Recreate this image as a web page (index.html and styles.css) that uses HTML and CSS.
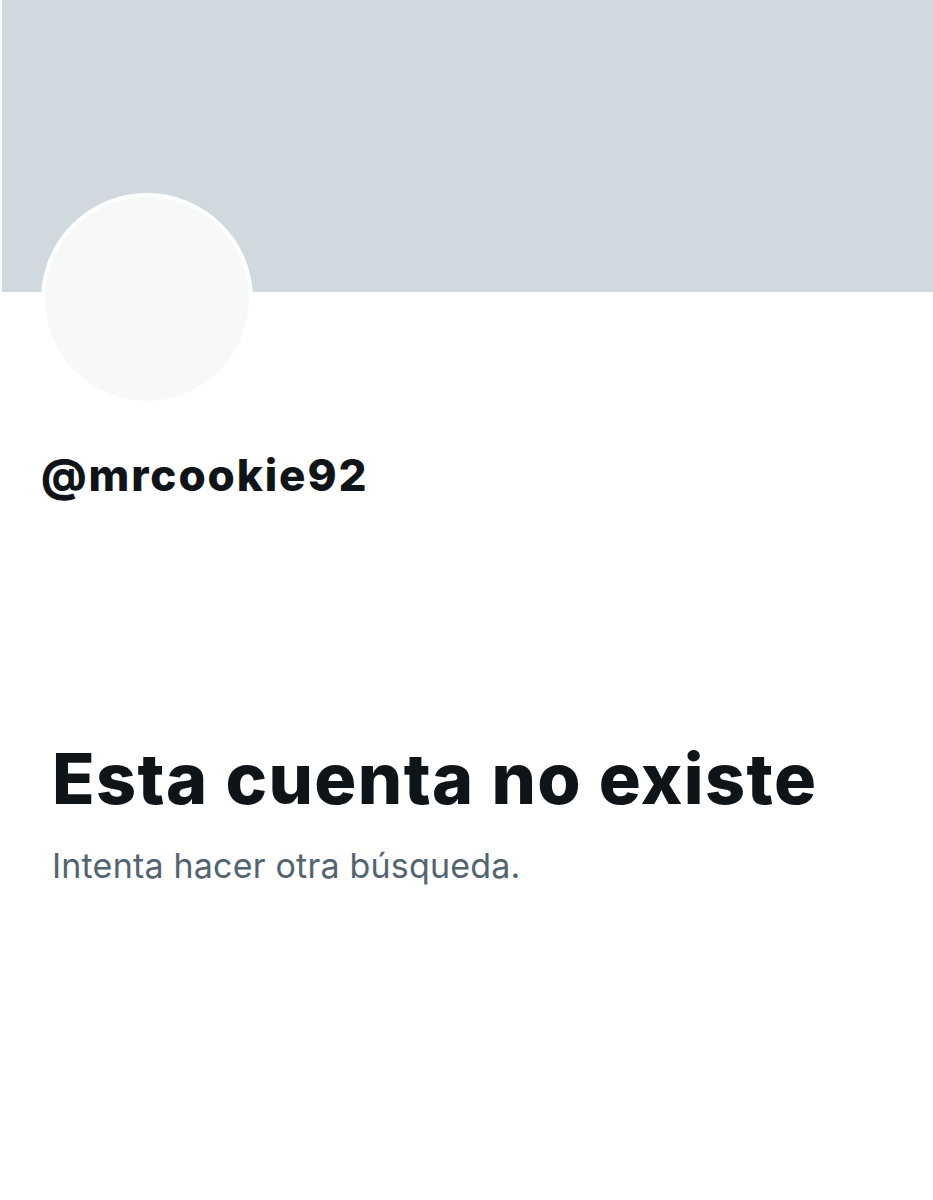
FILE: index.html
```html
<!DOCTYPE html>
<html lang="es">
<head>
<meta charset="utf-8">
<title>@mrcookie92</title>
<link rel="stylesheet" href="styles.css">
</head>
<body>
<main class="page">
  <header class="profile-top">
    <div class="banner"></div>
    <div class="avatar-row">
      <div class="avatar"></div>
    </div>
  </header>
  <div class="handle">@mrcookie92</div>
  <section class="empty">
    <h1 class="empty-title">Esta cuenta no existe</h1>
    <p class="empty-sub">Intenta hacer otra búsqueda.</p>
  </section>
</main>
</body>
</html>
```

FILE: styles.css
```css
html, body {
  margin: 0;
  padding: 0;
  background: #ffffff;
}
body {
  font-family: Inter, "Noto Sans", "Liberation Sans", sans-serif;
  color: #0f1419;
  width: 933px;
  height: 1200px;
  overflow: hidden;
}
.page {
  display: flex;
  flex-direction: column;
}
.profile-top {
  display: flex;
  flex-direction: column;
}
.banner {
  height: 292px;
  margin-left: 2px;
  background: #cfd9de;
}
.avatar-row {
  display: flex;
  padding-left: 41px;
  margin-top: -99px;
}
.avatar {
  width: 204px;
  height: 204px;
  border-radius: 50%;
  background: #f7f9f9;
  border: 4px solid #ffffff;
}
.handle {
  margin: 44px 0 0 41px;
  font-size: 44px;
  font-weight: 800;
  line-height: 52px;
  letter-spacing: 1.9px;
}
.empty {
  display: flex;
  flex-direction: column;
  padding: 0 0 0 52px;
  margin-top: 236px;
}
.empty-title {
  margin: 0;
  font-size: 70px;
  font-weight: 800;
  line-height: 84px;
  letter-spacing: 1.4px;
}
.empty-sub {
  margin: 25px 0 0 0;
  font-size: 34px;
  font-weight: 400;
  line-height: 40px;
  letter-spacing: 0.2px;
  color: #536471;
}
```
